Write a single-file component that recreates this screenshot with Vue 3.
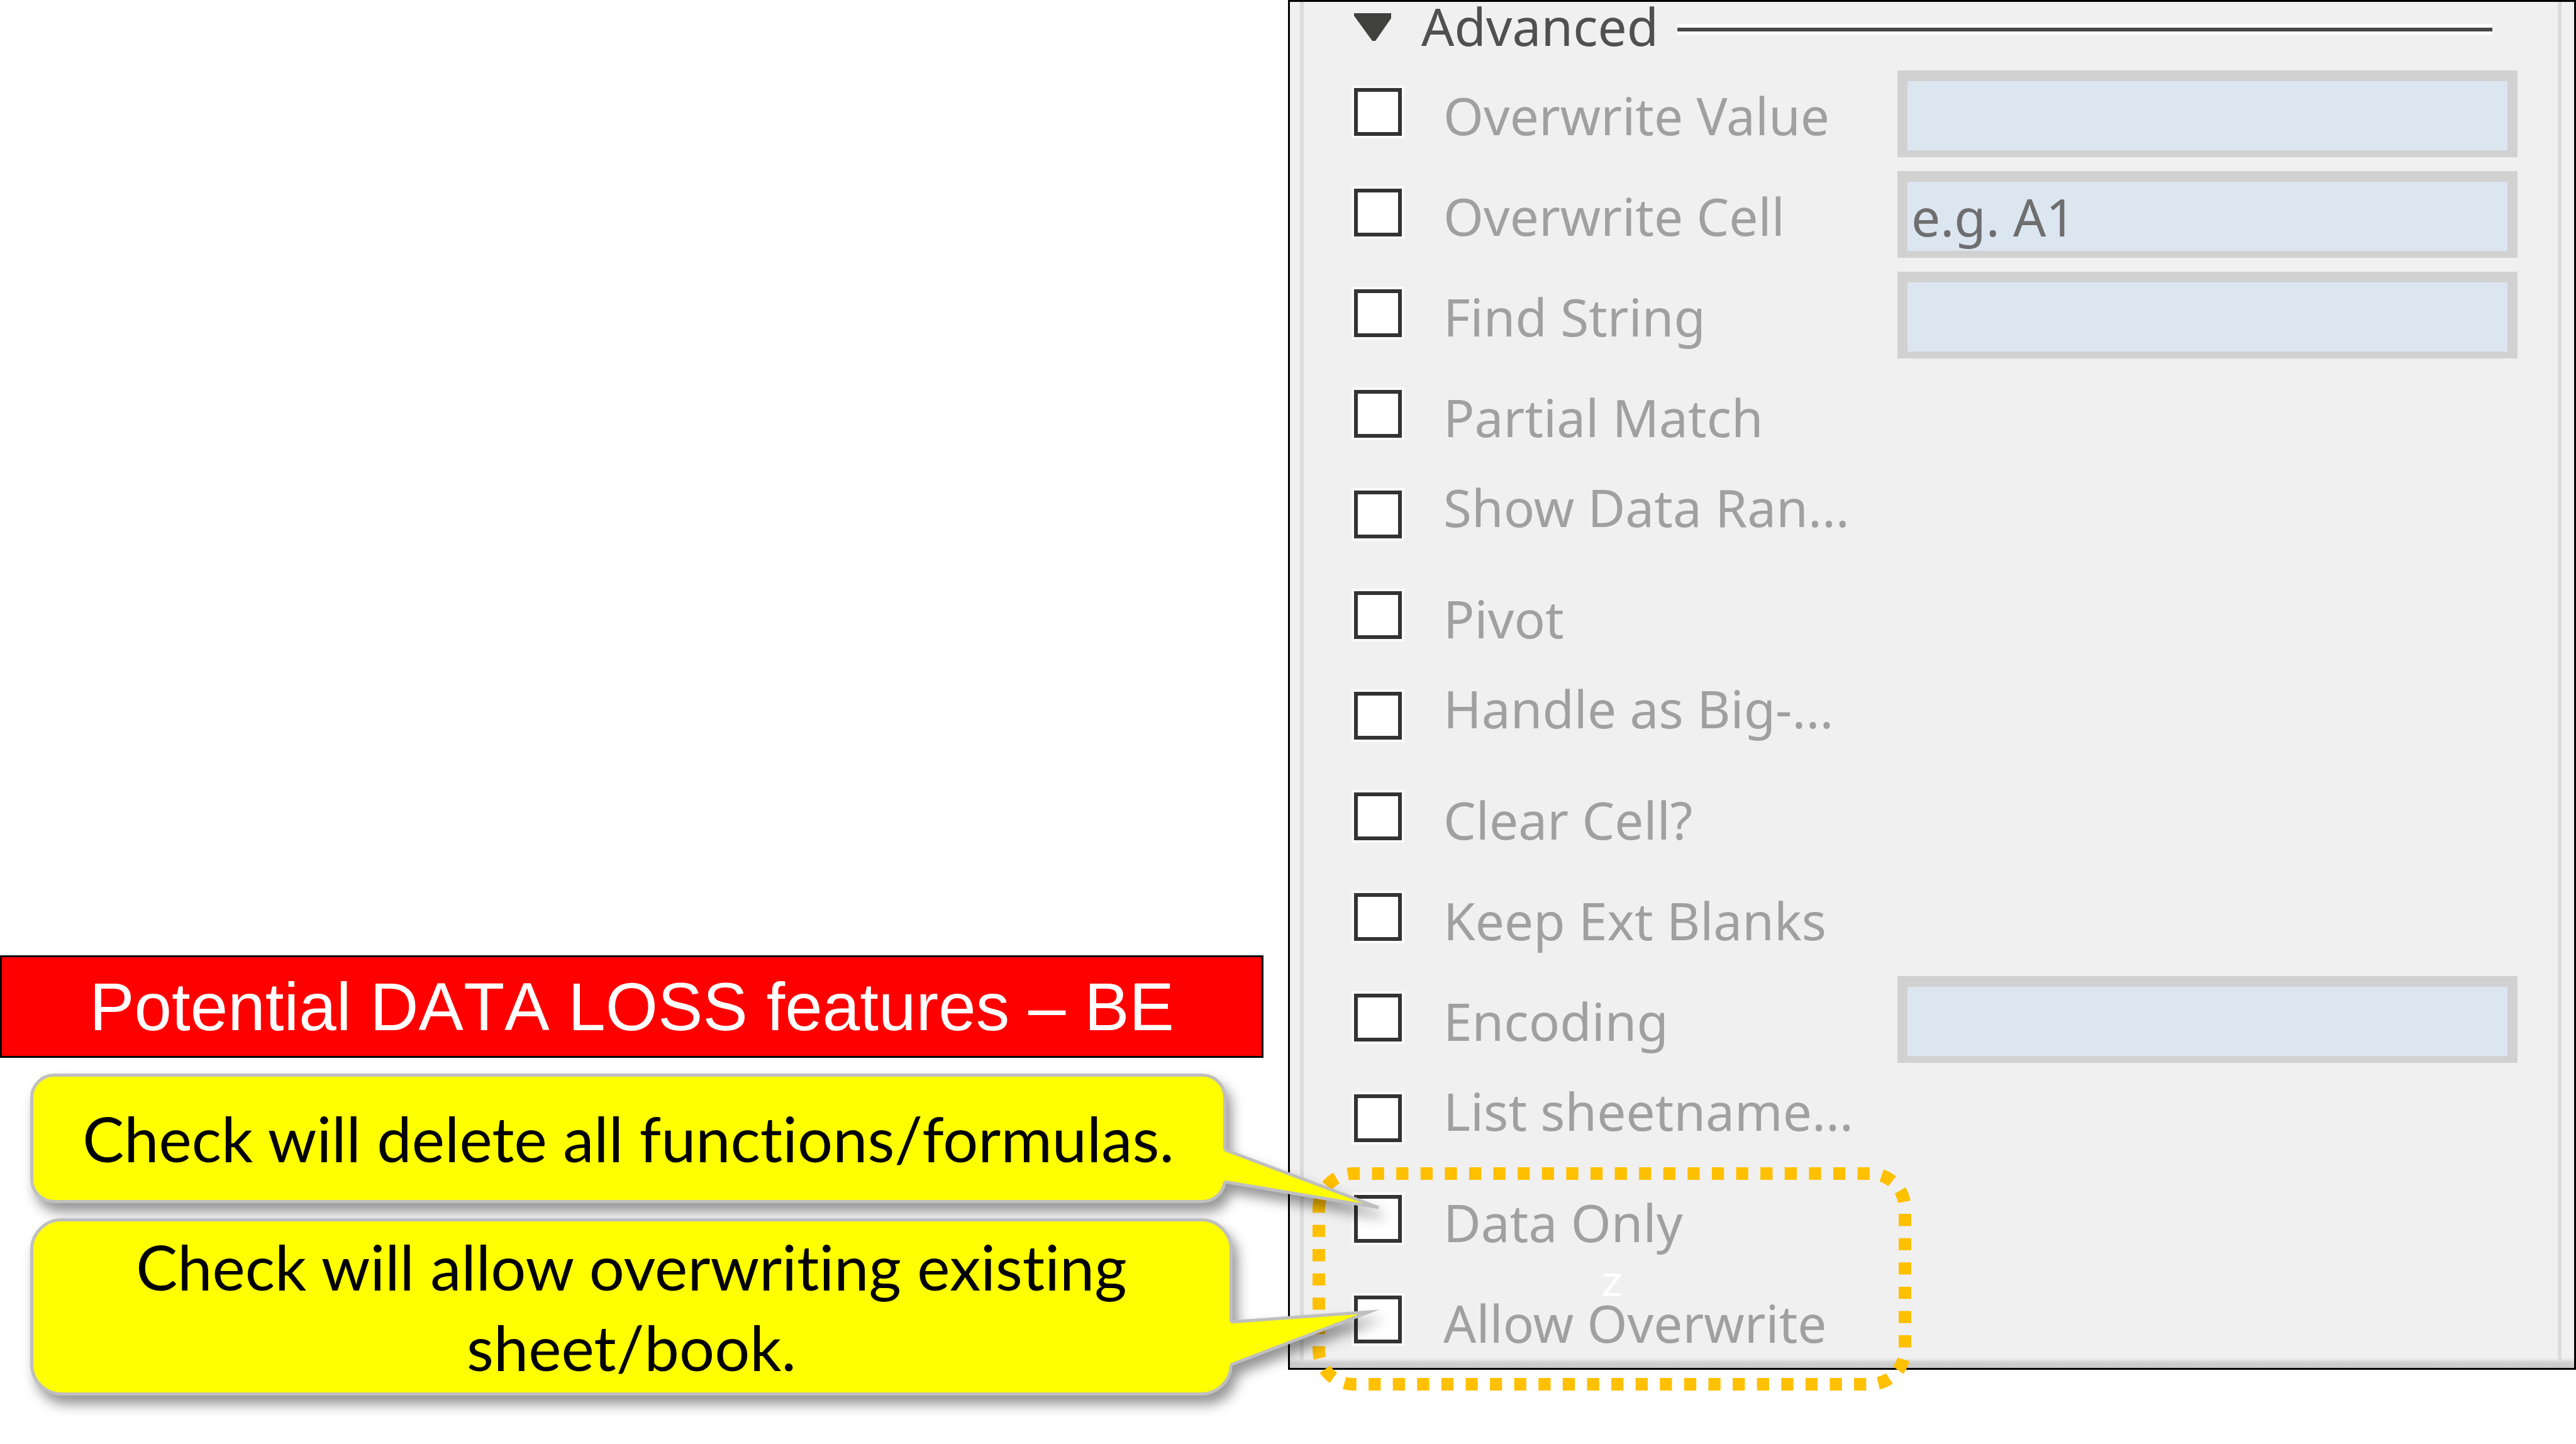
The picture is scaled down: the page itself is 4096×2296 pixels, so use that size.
<script setup>
const options = [
  { id: 'overwrite-value', label: 'Overwrite Value', field: true },
  { id: 'overwrite-cell', label: 'Overwrite Cell', field: true, hint: 'e.g. A1' },
  { id: 'find-string', label: 'Find String', field: true },
  { id: 'partial-match', label: 'Partial Match' },
  { id: 'show-data-range', label: 'Show Data Ran...', clipped: true },
  { id: 'pivot', label: 'Pivot' },
  { id: 'handle-big', label: 'Handle as Big-...', clipped: true },
  { id: 'clear-cell', label: 'Clear Cell?' },
  { id: 'keep-ext-blanks', label: 'Keep Ext Blanks' },
  { id: 'encoding', label: 'Encoding', field: true },
  { id: 'list-sheetnames', label: 'List sheetname...', clipped: true },
  { id: 'data-only', label: 'Data Only' },
  { id: 'allow-overwrite', label: 'Allow Overwrite' },
]
</script>

<template>
  <main class="slide">
    <section class="notes">
      <h1 class="banner">Potential DATA LOSS features – BE</h1>

      <div class="callout callout-single">
        <svg class="tail" width="260" height="240" aria-hidden="true">
          <path class="tail-fill" d="M-1 116 H2 L247 208 L2 167 H-1 Z" />
          <path class="tail-line" stroke-linejoin="bevel" d="M2 116 L247 208 L2 167" />
        </svg>
        <p>Check will delete all functions/formulas.</p>
      </div>

      <div class="callout callout-double">
        <svg class="tail" width="260" height="240" aria-hidden="true">
          <path class="tail-fill" d="M-1 160 H2 L222 144 L2 228 H-1 Z" />
          <path class="tail-line" stroke-linejoin="miter" stroke-miterlimit="12" d="M2 160 L222 144 L2 228" />
        </svg>
        <p>Check will allow overwriting existing sheet/book.</p>
      </div>
    </section>

    <section class="panel">
      <div class="sheet">
        <header class="group">
          <svg class="arrow" width="60" height="44" viewBox="0 0 60 44" aria-hidden="true">
            <path d="M0 0 H59 V8 L34 44 H29 L0 4 Z" fill="#40403e" />
          </svg>
          <h2>Advanced</h2>
          <hr />
        </header>

        <div v-for="o in options" :key="o.id" class="row">
          <input :id="o.id" class="tick" type="checkbox" />
          <label :for="o.id" class="name" :class="{ clipped: o.clipped }">{{ o.label }}</label>
          <input
            v-if="o.field"
            class="field"
            type="text"
            :placeholder="o.hint"
            :aria-label="o.label + ' value'"
          />
        </div>
      </div>

      <div class="highlight">
        <svg width="952" height="355" viewBox="-10 -10 952 355" aria-hidden="true">
          <path
            d="M0 55 A55 55 0 0 1 55 0 H877 A55 55 0 0 1 932 55 V280 A55 55 0 0 1 877 335 H55 A55 55 0 0 1 0 280 Z"
            fill="none"
            stroke="#ffc000"
            stroke-width="20"
            stroke-dasharray="19.3 19.3"
          />
        </svg>
        <span>z</span>
      </div>
    </section>
  </main>
</template>

<style>
body {
  background: #fff;
}
</style>

<style scoped>
.slide {
  display: flex;
  align-items: flex-start;
  min-height: 100vh;
}

.slide * {
  box-sizing: border-box;
}

.notes {
  position: relative;
  z-index: 1;
  width: 50%;
  padding: 1519px 0 60px;
}

.banner {
  margin: 0 39px 25px 0;
  height: 163px;
  border: 3px solid #000;
  background: #f00;
  color: #fff;
  font: 400 107px/158px "Liberation Sans", Arial, sans-serif;
  font-kerning: none;
  text-align: center;
  white-space: nowrap;
}

.callout {
  position: relative;
  display: flex;
  align-items: center;
  justify-content: center;
  margin-left: 48px;
  border: 5px solid #bfbfbf;
  background: #ff0;
  filter: drop-shadow(8px 14px 10px rgba(0, 0, 0, 0.42));
}

.callout p {
  margin: 0;
  color: #000;
  font: 400 99px/128px Lato, sans-serif;
  font-variant-ligatures: none;
  text-align: center;
}

.callout-single {
  height: 206px;
  margin-right: 98px;
  margin-bottom: 24px;
  border-radius: 38px;
}

.callout-double {
  height: 282px;
  margin-right: 88px;
  border-radius: 50px;
}

.callout-double p {
  padding: 0 150px;
}

.tail {
  position: absolute;
  top: 0;
  left: 100%;
  overflow: visible;
}

.tail-fill {
  fill: #ff0;
}

.tail-line {
  fill: none;
  stroke: #bfbfbf;
  stroke-width: 5px;
}

.panel {
  position: relative;
  width: 50%;
  border: 3px solid #000;
  background: linear-gradient(to top, #cacaca 0, #cecece 7px, #f0f0f0 16px);
  font-family: "Noto Sans", "Open Sans", sans-serif;
}

.sheet {
  display: flow-root;
  margin: 0 20px 12px 16px;
  padding: 0 64px 0 80px;
  border: solid #dcdcdc;
  border-width: 0 6px;
}

.group {
  display: flex;
  align-items: center;
  height: 98px;
  padding-right: 40px;
}

.arrow {
  flex: none;
  margin-bottom: 18px;
}

h2 {
  margin: 0 30px 22px 47px;
  color: #505050;
  font-size: 82px;
  font-weight: 400;
  line-height: 96px;
}

hr {
  flex: 1;
  height: 6px;
  margin: 0 0 10px;
  border: 0;
  background: #474745;
  box-shadow: 0 0 0 6px #fcfcfc;
  clip-path: inset(-6px 0);
}

.row {
  display: flex;
  align-items: center;
  height: 160px;
}

.row:last-child {
  margin-bottom: -18px;
}

.tick {
  appearance: none;
  flex: none;
  width: 76px;
  height: 76px;
  margin: 0 66px 6px 0;
  border: 6px solid #333;
  background: #fff;
  box-shadow: 0 0 0 4px #fafafa;
}

.name {
  flex: none;
  width: 722px;
  padding-top: 4px;
  color: #a0a0a0;
  font-size: 82px;
  line-height: 104px;
  white-space: nowrap;
}

.clipped {
  padding-bottom: 34px;
}

.field {
  flex: 1;
  min-width: 0;
  height: 138px;
  padding: 0 6px;
  border: solid #d1d1d1;
  border-width: 17px 16px 11px;
  border-radius: 0;
  background: #dce6f1;
  color: #6e6e6e;
  font: 400 82px/110px "Noto Sans", "Open Sans", sans-serif;
}

.field::placeholder {
  color: #6e6e6e;
  opacity: 1;
}

.highlight {
  position: absolute;
  left: 36px;
  bottom: -36px;
  width: 952px;
  height: 355px;
  padding-bottom: 2px;
  display: flex;
  align-items: center;
  justify-content: center;
  pointer-events: none;
}

.highlight svg {
  position: absolute;
  inset: 0;
}

.highlight span {
  color: #fff;
  font: 400 72px/80px Lato, sans-serif;
}
</style>
